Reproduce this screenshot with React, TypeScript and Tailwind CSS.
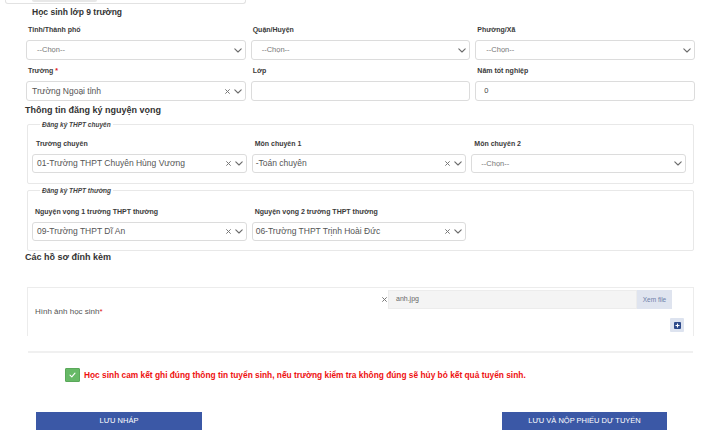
import React from "react";

const Chevron = () => (
  <svg width="8" height="5" viewBox="0 0 8 5" className="shrink-0">
    <path d="M0.8 0.8L4 4L7.2 0.8" fill="none" stroke="#6b6b6b" strokeWidth="1.1" strokeLinecap="round" strokeLinejoin="round" />
  </svg>
);

const Cross = () => (
  <svg width="5" height="5" viewBox="0 0 5 5" className="shrink-0">
    <path d="M0.6 0.6L4.4 4.4M4.4 0.6L0.6 4.4" fill="none" stroke="#777" strokeWidth="1" strokeLinecap="round" />
  </svg>
);

const Label = ({ children, pl = "pl-[2px]" }: { children: React.ReactNode; pl?: string }) => (
  <div className={`${pl} h-[10px] leading-[10px] text-[7px] font-bold text-[#3a3a3a] mb-[5px] whitespace-nowrap`}>{children}</div>
);

const Placeholder = ({ h = "h-[20px]", pl = "pl-[10px]" }: { h?: string; pl?: string }) => (
  <div className={`${h} border border-[#dcdcdc] rounded-[3px] bg-white flex items-center justify-between ${pl} pr-[3px]`}>
    <span className="text-[7.5px] text-[#777]">--Chọn--</span>
    <Chevron />
  </div>
);

const Selected = ({ text, h = "h-[20px]", pl = "pl-[5px]" }: { text: string; h?: string; pl?: string }) => (
  <div className={`${h} border border-[#dcdcdc] rounded-[3px] bg-white flex items-center justify-between ${pl} pr-[3px]`}>
    <span className="text-[8.5px] text-[#555] whitespace-nowrap">{text}</span>
    <div className="flex items-center gap-[4px]">
      <Cross />
      <Chevron />
    </div>
  </div>
);

const Field = ({ children }: { children: React.ReactNode }) => <div className="flex flex-col">{children}</div>;

export default function App() {
  return (
    <div className="relative w-[709px] h-[438px] overflow-hidden bg-white text-[#333] font-['Liberation_Sans',Arial,sans-serif]">
      {/* remnant of previous row */}
      <div className="ml-[5px] w-[241px] h-[4px] border-x border-b border-[#e2e2e2] rounded-b-[3px]">
        <div className="ml-[26px] w-[65px] h-[2px] bg-[#e8e8e8] rounded-b-[2px]" />
      </div>

      <div className="mt-[3px] ml-[32px] h-[10px] leading-[10px] text-[8.5px] font-bold text-[#333]">Học sinh lớp 9 trường</div>

      <div className="mt-[8px] ml-[26px] w-[669px] grid grid-cols-3 gap-x-[5px] gap-y-[6px]">
        <Field>
          <Label>Tỉnh/Thành phố</Label>
          <Placeholder />
        </Field>
        <Field>
          <Label>Quận/Huyện</Label>
          <Placeholder />
        </Field>
        <Field>
          <Label>Phường/Xã</Label>
          <Placeholder />
        </Field>
        <Field>
          <Label>
            Trường <span className="text-[#e02020]">*</span>
          </Label>
          <Selected text="Trường Ngoại tỉnh" />
        </Field>
        <Field>
          <Label>Lớp</Label>
          <div className="h-[20px] border border-[#dcdcdc] rounded-[3px] bg-white" />
        </Field>
        <Field>
          <Label>Năm tốt nghiệp</Label>
          <div className="h-[20px] border border-[#dcdcdc] rounded-[3px] bg-white flex items-center pl-[8px] text-[7.5px] text-[#444]">0</div>
        </Field>
      </div>

      <div className="mt-[3px] ml-[25px] h-[12px] leading-[12px] text-[9px] font-bold text-[#333]">Thông tin đăng ký nguyện vọng</div>

      {/* fieldset 1 */}
      <div className="relative mt-[8px] ml-[27px] w-[667px] h-[60px] border border-[#e8e8e8] rounded-[2px] pt-[14px] pl-[4px]">
        <div className="absolute -top-[5px] left-[12px] bg-white px-[2px] h-[9px] leading-[9px] text-[6.5px] italic font-bold text-[#444]">Đăng ký THPT chuyên</div>
        <div className="w-[654px] grid grid-cols-3 gap-x-[5px]">
          <Field>
            <Label pl="pl-[4px]">Trường chuyên</Label>
            <Selected text="01-Trường THPT Chuyên Hùng Vương" h="h-[19px]" pl="pl-[4px]" />
          </Field>
          <Field>
            <Label pl="pl-[3px]">Môn chuyên 1</Label>
            <Selected text="-Toán chuyên" h="h-[19px]" pl="pl-[3px]" />
          </Field>
          <Field>
            <Label pl="pl-[3px]">Môn chuyên 2</Label>
            <Placeholder h="h-[19px]" pl="pl-[9px]" />
          </Field>
        </div>
      </div>

      {/* fieldset 2 */}
      <div className="relative mt-[6px] ml-[27px] w-[667px] h-[61px] border border-[#e8e8e8] rounded-[2px] pt-[16px] pl-[4px]">
        <div className="absolute -top-[5px] left-[12px] bg-white px-[2px] h-[9px] leading-[9px] text-[6.5px] italic font-bold text-[#444]">Đăng ký THPT thường</div>
        <div className="w-[654px] grid grid-cols-3 gap-x-[5px]">
          <Field>
            <Label pl="pl-[3px]">Nguyện vọng 1 trường THPT thường</Label>
            <Selected text="09-Trường THPT Dĩ An" h="h-[19px]" pl="pl-[4px]" />
          </Field>
          <Field>
            <Label pl="pl-[3px]">Nguyện vọng 2 trường THPT thường</Label>
            <Selected text="06-Trường THPT Trịnh Hoài Đức" h="h-[19px]" pl="pl-[3px]" />
          </Field>
        </div>
      </div>

      <div className="ml-[25px] h-[12px] leading-[12px] text-[9px] font-bold text-[#333]">Các hồ sơ đính kèm</div>

      {/* attachments */}
      <div className="mt-[24px] ml-[27px] w-[667px] h-[49px] border-t border-x border-[#ececec] flex">
        <div className="w-[345px] shrink-0 pl-[7px] pt-[19px] h-[10px] leading-[10px] text-[8px] text-[#555] box-content">
          Hình ảnh học sinh<span className="text-[#e02020]">*</span>
        </div>
        <div className="flex flex-col pt-[2px]">
          <div className="flex items-center h-[19px]">
            <div className="w-[8px] flex justify-center">
              <Cross />
            </div>
            <div className="w-[249px] h-[19px] bg-[#f4f4f4] border border-[#ececec] flex items-center pl-[7px] text-[7px] text-[#666]">anh.jpg</div>
            <div className="w-[35px] h-[19px] bg-[#dfe4ef] flex items-center justify-center text-[6.5px] text-[#6d80a8]">Xem file</div>
          </div>
          <div className="mt-[9px] ml-[290px] w-[14px] h-[14px] bg-[#dde3ef] rounded-[1px] flex items-center justify-center">
            <svg width="7" height="7" viewBox="0 0 7 7">
              <rect x="0" y="0" width="7" height="7" rx="1" fill="#2d4a8a" />
              <path d="M3.5 1.5V5.5M1.5 3.5H5.5" stroke="#fff" strokeWidth="1.1" />
            </svg>
          </div>
        </div>
      </div>

      <div className="mt-[15px] ml-[28px] w-[665px] h-[2px] bg-[#f0f0f0]" />

      <div className="mt-[15px] ml-[65px] flex items-center h-[14px]">
        <div className="w-[15px] h-[14px] bg-[#66b966] border border-[#5aa85a] rounded-[1px] flex items-center justify-center">
          <svg width="7" height="6" viewBox="0 0 7 6">
            <path d="M1 3.2L2.8 4.8L6 1.2" fill="none" stroke="#fff" strokeWidth="1.1" strokeLinecap="round" strokeLinejoin="round" />
          </svg>
        </div>
        <span className="ml-[4px] text-[8.35px] font-bold text-[#ee1111] whitespace-nowrap">
          Học sinh cam kết ghi đúng thông tin tuyển sinh, nếu trường kiểm tra không đúng sẽ hủy bỏ kết quả tuyển sinh.
        </span>
      </div>

      <div className="mt-[30px] ml-[36px] w-[631px] flex justify-between">
        <div className="w-[166px] h-[18px] bg-[#3b58a6] flex items-center justify-center text-[7.5px] text-white">LƯU NHÁP</div>
        <div className="w-[165px] h-[18px] bg-[#3b58a6] flex items-center justify-center text-[7.5px] text-white">LƯU VÀ NỘP PHIẾU DỰ TUYỂN</div>
      </div>
    </div>
  );
}
